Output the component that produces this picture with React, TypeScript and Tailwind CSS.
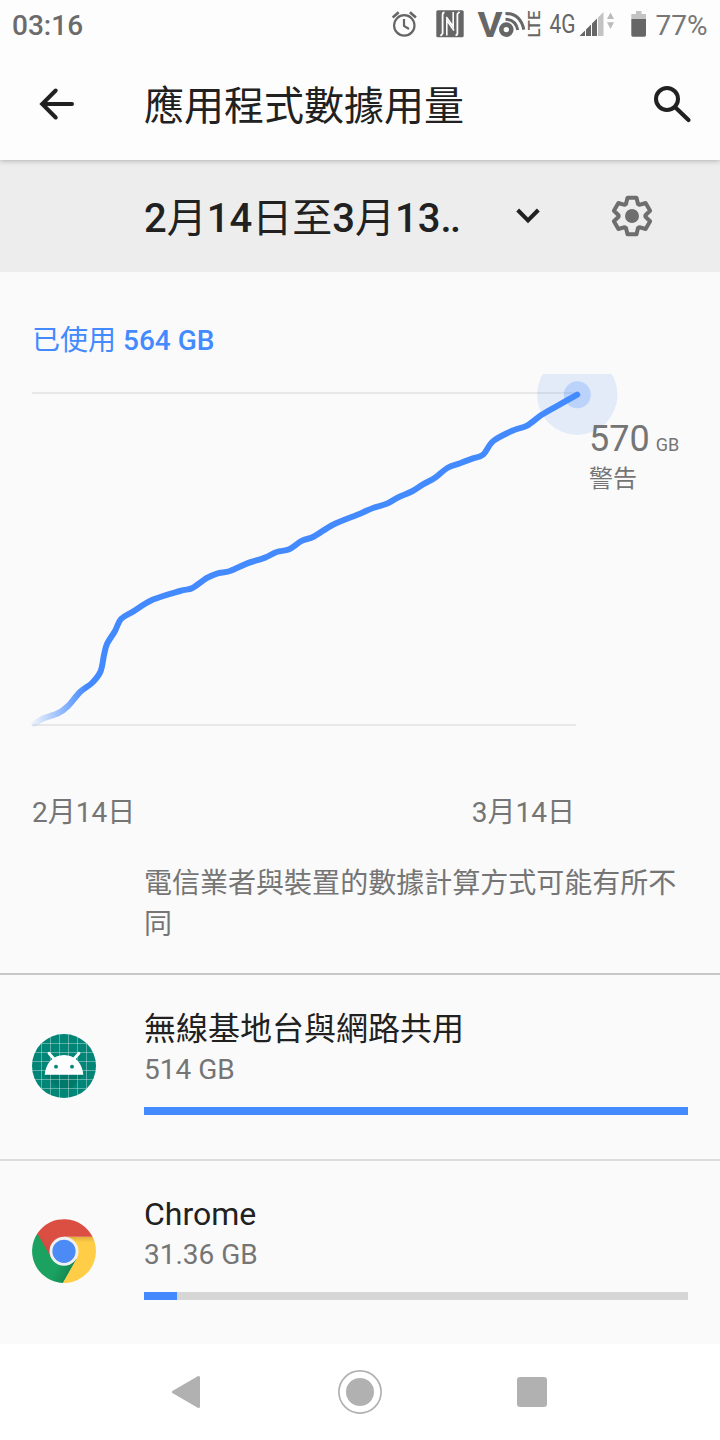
import React from 'react';

type Point = [number, number];

interface AppUsage {
  name: string;
  usage: string;
  percent: number;
  icon: React.ReactNode;
}

// cumulative usage over the cycle, in chart units (720 x 360)
const usagePoints: Point[] = [
  [34, 350], [43.5, 344.3], [58, 339.3], [68, 332], [80, 318], [92, 309], [100.5, 297.5], [104, 281],
  [107, 270], [115, 257], [121, 245], [133, 237.6], [153, 225.6], [180, 217], [192.5, 214], [206.5, 204.2],
  [217, 199.6], [230, 197], [246.7, 189.6], [265, 183.6], [276.7, 178], [289.3, 175.2], [301.7, 166.9],
  [314, 162.5], [333, 150.7], [360, 139.7], [373, 134], [386.7, 129.8], [398, 123.5], [411.7, 117.5], [423, 110.3],
  [435, 103.8], [447.3, 94], [460, 89.2], [473, 84.4], [483.3, 80.5], [493.3, 67], [513, 56.5], [527, 51.6],
  [541.7, 40.8], [560, 30.3], [577.3, 20.6],
];

function smoothPath(pts: Point[]) {
  let d = `M${pts[0][0]} ${pts[0][1]}`;
  for (let i = 0; i < pts.length - 1; i++) {
    const p0 = pts[i - 1] || pts[i];
    const p1 = pts[i];
    const p2 = pts[i + 1];
    const p3 = pts[i + 2] || p2;
    d += ` C${p1[0] + (p2[0] - p0[0]) / 6} ${p1[1] + (p2[1] - p0[1]) / 6} ${p2[0] - (p3[0] - p1[0]) / 6} ${p2[1] - (p3[1] - p1[1]) / 6} ${p2[0]} ${p2[1]}`;
  }
  return d;
}

export default function App() {
  const apps: AppUsage[] = [
    { name: '無線基地台與網路共用', usage: '514 GB', percent: 100, icon: <AndroidIcon /> },
    { name: 'Chrome', usage: '31.36 GB', percent: 6, icon: <ChromeIcon /> },
  ];

  return (
    <div lang="zh-Hant" className="w-[720px] h-[1440px] flex flex-col overflow-hidden bg-[#fafafa] text-[#212121] font-[Roboto,'Noto_Sans_CJK_TC',sans-serif]">
      {/* Header */}
      <div className="relative z-10 shrink-0 h-40 bg-[#fdfdfd] shadow-[0_1px_5px_rgba(0,0,0,0.25)]">
        <StatusBar />
        <header className="h-28 flex items-center pl-9 pr-7">
          <button aria-label="返回" className="w-[108px]">
            <svg width="42" height="42" viewBox="0 0 42 42" fill="none" stroke="#212121" strokeWidth="4" strokeLinecap="round">
              <path d="M36 21H7M19.7 7.5L6.2 21L19.7 34.5" />
            </svg>
          </button>
          <h1 className="flex-1 pt-[6px] text-[40px] leading-[56px]">應用程式數據用量</h1>
          <button aria-label="搜尋">
            <svg width="40" height="40" viewBox="0 0 40 40" fill="none" stroke="#212121">
              <circle cx="15" cy="15" r="11" strokeWidth="4" />
              <path d="M24.5 24.5L36.5 36" strokeWidth="4.2" strokeLinecap="round" />
            </svg>
          </button>
        </header>
      </div>

      {/* Billing cycle */}
      <div className="shrink-0 h-28 bg-[#ededed] flex items-center pl-36 pr-[68px]">
        <div className="flex-1 pt-[5px] text-[40px] leading-[56px] font-medium whitespace-nowrap">
          2<Cjk>月</Cjk>14<Cjk>日至</Cjk>3<Cjk>月</Cjk>13<span className="tracking-[-1.5px]">..</span>
        </div>
        <svg width="24" height="18" viewBox="0 0 24 18" fill="none" stroke="#212121" strokeWidth="4">
          <path d="M1.7 3L12 13.4L22.3 3" />
        </svg>
        <button aria-label="設定" className="ml-[72px]">
          <svg width="40" height="42" viewBox="-20 -21 40 42">
            <path
              d="M-6-12L-4.5-18.3H4.5L6-12L7.4-11.2L13.6-13L18.1-5.3L13.4-.8V.8L18.1 5.3L13.6 13L7.4 11.2L6 12L4.5 18.3H-4.5L-6 12L-7.4 11.2L-13.6 13L-18.1 5.3L-13.4.8V-.8L-18.1-5.3L-13.6-13L-7.4-11.2Z"
              fill="none" stroke="#6e6e6e" strokeWidth="4" strokeLinejoin="round"
            />
            <circle r="7" fill="#6e6e6e" />
          </svg>
        </button>
      </div>

      {/* Usage chart */}
      <section className="shrink-0 h-[702px] flex flex-col">
        <p className="h-[102px] pt-[49px] pl-8 text-[28px] leading-10 font-medium text-[#448aff]">
          <Cjk>已使用</Cjk> 564 GB
        </p>
        <UsageChart />
        <div className="w-[575px] mt-[59px] pl-8 flex justify-between text-[28px] leading-10 text-[#757575]">
          <span>2月14日</span>
          <span>3月14日</span>
        </div>
        <p className="mt-[30px] pl-36 pr-8 text-[28px] leading-[41px] tracking-[0.02px] text-[#757575]">
          電信業者與裝置的數據計算方式可能有所不同
        </p>
      </section>

      {/* App list */}
      <ul className="flex-1">
        {apps.map((app, i) => (
          <li key={app.name} className={i === 0 ? 'h-[186px] -mt-px pt-px border-t-2 border-[#c8c8c8]' : 'h-[185px] border-t-2 border-[#dcdcdc]'}>
            <AppRow app={app} />
          </li>
        ))}
      </ul>

      <NavBar />
    </div>
  );
}

// CJK glyphs stay at regular weight inside medium text
function Cjk({ children }: { children: React.ReactNode }) {
  return <span className="font-normal">{children}</span>;
}

function StatusBar() {
  return (
    <div className="h-12 flex items-center justify-between pl-3 pr-3 text-[#6b6b6b]">
      <span className="pt-[3px] text-[28px] leading-8 font-medium">03:16</span>
      <div className="flex items-center h-12">
        <svg width="269" height="48" viewBox="384 0 269 48">
          {/* alarm */}
          <g fill="none" stroke="#666" strokeWidth="2.2">
            <circle cx="404.3" cy="25.4" r="10.2" />
            <path d="M404 19V26L409 29" />
            <path d="M392.7 17.5L398.7 12.3M409.9 12.3L415.9 17.5" strokeWidth="2.6" />
          </g>
          {/* nfc */}
          <rect x="436.3" y="10.3" width="27.4" height="27" rx="1.5" fill="#666" />
          <g fill="none" stroke="#fdfdfd">
            <path d="M440.5 35.8L442.6 33.5V14.5Q442.6 12.5 444.5 12.5" strokeWidth="1.8" />
            <path d="M459.5 11.8L457.4 14V33.2Q457.4 35.2 455.5 35.2" strokeWidth="1.8" />
            <path d="M446.8 35.5V20.3L454 30.5" strokeWidth="1.6" />
            <path d="M453.2 12V26.5L446.3 17" strokeWidth="1.6" />
          </g>
          {/* volte */}
          <text x="477.5" y="36.5" fontSize="35.5" fontWeight="700" textLength="25" lengthAdjust="spacingAndGlyphs" fill="#666">V</text>
          <circle cx="506.3" cy="29.6" r="5" fill="none" stroke="#666" strokeWidth="4.6" />
          <path d="M505.5 19.3Q515.5 19.5 517.8 30M505.5 13.4Q520.5 13.5 523.8 29.6" fill="none" stroke="#666" strokeWidth="3" />
          <text transform="translate(539.8 37.5) rotate(-90)" fontSize="16" fontWeight="500" textLength="27" lengthAdjust="spacingAndGlyphs" fill="#666">LTE</text>
          {/* network */}
          <text x="549.5" y="32.5" fontSize="25" textLength="26" lengthAdjust="spacingAndGlyphs" fill="#666">4G</text>
          <path d="M579.5 36L585 30.5V36ZM586 29.5L591 24.5V36H586ZM592 23.5L597 18.5V36H592Z" fill="#666" />
          <path d="M598 17.5L603.5 12V36H598Z" fill="#c3c3c3" />
          <path d="M607 19L610.5 12.5L614 19ZM607 22.3H614L610.5 29Z" fill="#bbb" />
          {/* battery */}
          <path d="M631.3 19V14H636V11H641.5V14H646V19Z" fill="#c3c3c3" />
          <path d="M631.3 19H646V35Q646 36.8 644.5 36.8H632.8Q631.3 36.8 631.3 35Z" fill="#666" />
        </svg>
        <span className="ml-[2.5px] w-[52.5px] pt-[3px] text-[28px] leading-8 text-[#777]">77%</span>
      </div>
    </div>
  );
}

function UsageChart() {
  return (
    <div className="relative h-[360px]">
      <svg width="720" height="360" viewBox="0 0 720 360" className="block">
        <defs>
          <linearGradient id="fade" gradientUnits="userSpaceOnUse" x1="32" y1="0" x2="86" y2="0">
            <stop offset="0" stopColor="#448aff" stopOpacity="0.05" />
            <stop offset="1" stopColor="#448aff" />
          </linearGradient>
        </defs>
        <path d="M32 19H576M32 351H576" stroke="#e8e8e8" strokeWidth="2" />
        <circle cx="577.3" cy="20.7" r="40.2" fill="#4080fa" fillOpacity="0.12" />
        <circle cx="577.3" cy="20.7" r="13.5" fill="#448aff" fillOpacity="0.25" />
        <path d={smoothPath(usagePoints)} fill="none" stroke="url(#fade)" strokeWidth="6" strokeLinecap="round" strokeLinejoin="round" />
      </svg>
      {/* Warning threshold */}
      <div className="absolute left-[589px] top-[43px] text-[#757575] whitespace-nowrap">
        <div className="flex items-baseline gap-[6px] leading-[44px]">
          <span className="text-[36px]">570</span>
          <span className="text-[18px]">GB</span>
        </div>
        <div className="-mt-[6px] text-[24px] leading-9">警告</div>
      </div>
    </div>
  );
}

function AppRow({ app }: { app: AppUsage }) {
  return (
    <div className="flex pl-8 pr-8">
      <div className="w-28 shrink-0 pt-[58px]">{app.icon}</div>
      <div className="flex-1 pt-[31px]">
        <div className="text-[32px] leading-[44px]">{app.name}</div>
        <div className="text-[28px] leading-[38px] text-[#757575]">{app.usage}</div>
        <div className="mt-[17.5px] h-2 bg-[#d6d6d6]">
          <div className="h-full bg-[#448aff]" style={{ width: `${app.percent}%` }} />
        </div>
      </div>
    </div>
  );
}

function AndroidIcon() {
  return (
    <svg width="64" height="64" viewBox="0 0 64 64">
      <defs>
        <clipPath id="disc"><circle cx="32" cy="32" r="32" /></clipPath>
      </defs>
      <g clipPath="url(#disc)">
        <rect width="64" height="64" fill="#008577" />
        <path d="M13 41H51L40 54L28 56Z" fill="#00796b" />
        <path
          d="M9.5 0V64M18.5 0V64M27.5 0V64M36.5 0V64M45.5 0V64M54.5 0V64M0 9.5H64M0 18.5H64M0 27.5H64M0 36.5H64M0 45.5H64M0 54.5H64"
          stroke="#fff" strokeOpacity="0.4" strokeWidth="0.9"
        />
        <path d="M12.7 40.7C13.5 29.5 21 21 32 21S50.5 29.5 51.3 40.7Z" fill="#fff" />
        <path d="M17 19.3L23 26M47 19.3L41 26" stroke="#fff" strokeWidth="2.8" strokeLinecap="round" />
        <circle cx="24" cy="32.7" r="1.9" fill="#008577" />
        <circle cx="40" cy="32.7" r="1.9" fill="#008577" />
      </g>
    </svg>
  );
}

function ChromeIcon() {
  return (
    <svg width="64" height="64" viewBox="0 0 64 64">
      <defs>
        <linearGradient id="redShade" x1="0" y1="1" x2="1" y2="0">
          <stop offset="0" stopColor="#c5433a" />
          <stop offset="0.35" stopColor="#db4f43" />
        </linearGradient>
        <linearGradient id="yellowShade" x1="0" y1="0" x2="0" y2="1">
          <stop offset="0" stopColor="#e3ae3a" />
          <stop offset="0.12" stopColor="#ffcd46" />
        </linearGradient>
        <linearGradient id="greenShade" x1="0" y1="0" x2="1" y2="0.5">
          <stop offset="0.7" stopColor="#1ba261" />
          <stop offset="1" stopColor="#138750" />
        </linearGradient>
      </defs>
      <path d="M5.3 14.5A32 32 0 0 0 31 64L45 40L32 32Z" fill="url(#greenShade)" />
      <path d="M60.6 17.8A32 32 0 0 1 31 64L44.8 39.2L32 17.8Z" fill="url(#yellowShade)" />
      <path d="M5.3 14.5A32 32 0 0 1 60.6 17.8H32L19.5 39.2Z" fill="url(#redShade)" />
      <circle cx="32" cy="32.3" r="14.5" fill="#f1f1f1" />
      <circle cx="32" cy="32.3" r="11.6" fill="#4c8bf5" />
    </svg>
  );
}

function NavBar() {
  return (
    <nav className="shrink-0 h-24 bg-white flex items-center pl-[172px] pr-[173px] justify-between">
      <svg width="29" height="34" viewBox="0 0 29 34">
        <path d="M1.5 17L26.5 2.5V31.5Z" fill="#b1b1b1" stroke="#b1b1b1" strokeWidth="3" strokeLinejoin="round" />
      </svg>
      <svg width="44" height="44" viewBox="0 0 44 44" className="ml-px">
        <circle cx="22" cy="22" r="21.1" fill="none" stroke="#b1b1b1" strokeWidth="1.7" />
        <circle cx="22" cy="22" r="14" fill="#b1b1b1" />
      </svg>
      <div className="size-[30px] rounded-[3px] bg-[#b1b1b1]" />
    </nav>
  );
}
